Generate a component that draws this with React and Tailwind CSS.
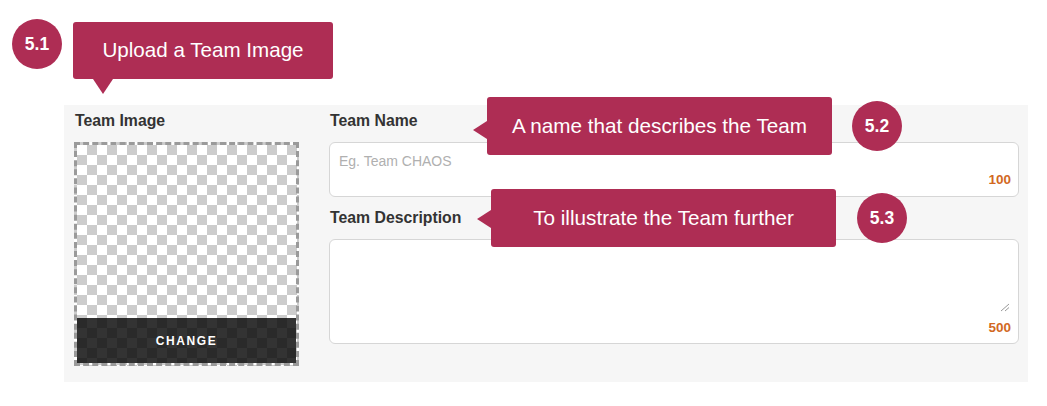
import React from 'react';

const MAROON = 'bg-[#ae2d54]';

function Badge({ label, className }) {
  return (
    <div className={`absolute flex h-[50px] w-[50px] items-center justify-center rounded-full ${MAROON} text-[17.5px] font-bold text-white ${className}`}>
      {label}
    </div>
  );
}

function Label({ children }) {
  return (
    <div className="ml-[1px] h-[18px] text-[15.8px] font-bold leading-[18px] text-[#333333]">{children}</div>
  );
}

export default function App() {
  return (
    <div className="relative h-[406px] w-[1047px] overflow-hidden bg-white pl-[64px] pt-[105px] font-['Liberation_Sans',Arial,sans-serif]">
      {/* Form panel */}
      <div className="flex h-[277px] w-[964px] bg-[#f6f6f6] pl-[10px] pr-[9px] pt-[7px]">
        {/* Image column */}
        <div className="flex w-[225px] flex-col">
          <Label>Team Image</Label>
          <div className="mt-[12px] flex h-[224px] w-[225px] flex-col justify-end border-[3px] border-dashed border-[#9a9a9a] bg-[conic-gradient(#cccccc_25%,#ffffff_0_50%,#cccccc_0_75%,#ffffff_0)] bg-size-[20px_20px]">
            <div className="flex h-[45px] items-center justify-center bg-[conic-gradient(#333333_25%,#2a2a2a_0_50%,#333333_0_75%,#2a2a2a_0)] bg-size-[20px_20px] text-[12px] font-bold tracking-[1.6px] text-white">
              CHANGE
            </div>
          </div>
        </div>

        {/* Fields column */}
        <div className="ml-[30px] flex w-[690px] flex-col">
          <Label>Team Name</Label>
          <div className="mt-[12px] flex h-[55px] flex-col justify-between rounded-[6px] border border-[#d6d6d6] bg-white pb-[8px] pl-[9px] pr-[7px] pt-[9px]">
            <div className="text-[14px] leading-[18px] text-[#b0b0b0]">Eg. Team CHAOS</div>
            <div className="text-right text-[13.5px] font-bold leading-[16px] text-[#d2691f]">100</div>
          </div>

          <div className="mt-[12px]">
            <Label>Team Description</Label>
          </div>
          <div className="relative mt-[12px] flex h-[105px] flex-col justify-end rounded-[6px] border border-[#d6d6d6] bg-white pb-[7px] pr-[7px]">
            <svg className="absolute bottom-[31px] right-[8px]" width="10" height="9" viewBox="0 0 10 9">
              <path d="M1 8 L9 1 M5 8 L9 4.5" stroke="#999999" strokeWidth="1" fill="none" />
            </svg>
            <div className="text-right text-[13.5px] font-bold leading-[16px] text-[#d2691f]">500</div>
          </div>
        </div>
      </div>

      {/* Annotations */}
      <Badge label="5.1" className="left-[12px] top-[19px]" />
      <div className={`absolute left-[73px] top-[22px] flex h-[57px] w-[260px] items-center justify-center rounded-[3px] ${MAROON} text-[20.6px] text-white`}>
        Upload a Team Image
      </div>
      <div className="absolute left-[93px] top-[79px] h-0 w-0 border-x-[10px] border-t-[15px] border-x-transparent border-t-[#ae2d54]" />

      <div className={`absolute left-[487px] top-[97px] flex h-[58px] w-[345px] items-center justify-center rounded-[3px] ${MAROON} text-[20.7px] text-white`}>
        A name that describes the Team
      </div>
      <div className="absolute left-[473px] top-[121px] h-0 w-0 border-y-[9px] border-r-[14px] border-y-transparent border-r-[#ae2d54]" />
      <Badge label="5.2" className="left-[852px] top-[101px]" />

      <div className={`absolute left-[491px] top-[189px] flex h-[58px] w-[345px] items-center justify-center rounded-[3px] ${MAROON} text-[20.7px] text-white`}>
        To illustrate the Team further
      </div>
      <div className="absolute left-[477px] top-[210px] h-0 w-0 border-y-[9px] border-r-[14px] border-y-transparent border-r-[#ae2d54]" />
      <Badge label="5.3" className="left-[857px] top-[193px]" />
    </div>
  );
}
